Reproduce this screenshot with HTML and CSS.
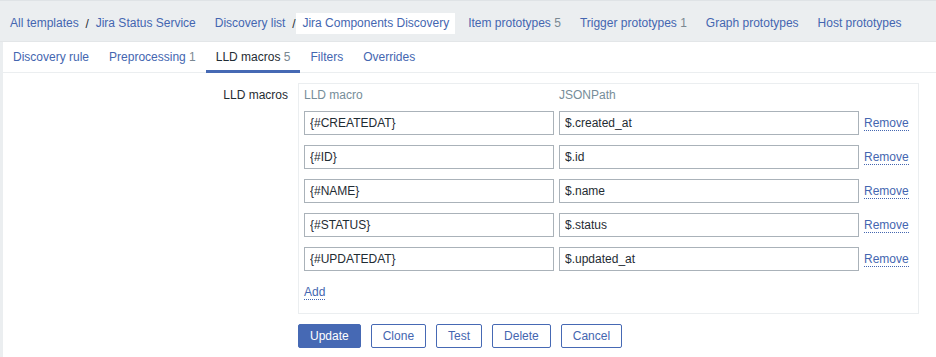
FILE: index.html
```html
<!DOCTYPE html>
<html lang="en">
<head>
    <meta charset="UTF-8">
    <meta name="viewport" content="width=device-width, initial-scale=1.0">
    <title>Discovery rules</title>
    <link rel="stylesheet" href="styles.css">
</head>
<body>
    <ul class="crumbs">
        <li class="crumb-group">
            <a href="#" class="crumb">All templates</a>
            <span class="sep">/</span>
            <a href="#" class="crumb">Jira Status Service</a>
        </li>
        <li class="crumb-group">
            <a href="#" class="crumb">Discovery list</a>
            <span class="sep">/</span>
            <span class="crumb selected">Jira Components Discovery</span>
        </li>
        <li class="crumb-group"><a href="#" class="crumb">Item prototypes <sup>5</sup></a></li>
        <li class="crumb-group"><a href="#" class="crumb">Trigger prototypes <sup>1</sup></a></li>
        <li class="crumb-group"><a href="#" class="crumb">Graph prototypes</a></li>
        <li class="crumb-group"><a href="#" class="crumb">Host prototypes</a></li>
    </ul>
    <div class="content">
        <ul class="tabs">
            <li><a href="#">Discovery rule</a></li>
            <li><a href="#">Preprocessing <sup>1</sup></a></li>
            <li class="active"><a href="#">LLD macros <sup>5</sup></a></li>
            <li><a href="#">Filters</a></li>
            <li><a href="#">Overrides</a></li>
        </ul>
        <form class="form">
            <div class="form-row">
                <label class="form-label">LLD macros</label>
                <div class="macro-box">
                    <div class="macro-grid">
                        <div class="col-head">LLD macro</div>
                        <div class="col-head">JSONPath</div>
                        <div></div>

                        <input type="text" value="{#CREATEDAT}">
                        <input type="text" value="$.created_at">
                        <a href="#" class="link-dotted">Remove</a>

                        <input type="text" value="{#ID}">
                        <input type="text" value="$.id">
                        <a href="#" class="link-dotted">Remove</a>

                        <input type="text" value="{#NAME}">
                        <input type="text" value="$.name">
                        <a href="#" class="link-dotted">Remove</a>

                        <input type="text" value="{#STATUS}">
                        <input type="text" value="$.status">
                        <a href="#" class="link-dotted">Remove</a>

                        <input type="text" value="{#UPDATEDAT}">
                        <input type="text" value="$.updated_at">
                        <a href="#" class="link-dotted">Remove</a>
                    </div>
                    <div class="add-row">
                        <a href="#" class="link-dotted">Add</a>
                    </div>
                </div>
            </div>
            <div class="form-actions">
                <button type="button" class="btn primary">Update</button>
                <button type="button" class="btn">Clone</button>
                <button type="button" class="btn">Test</button>
                <button type="button" class="btn">Delete</button>
                <button type="button" class="btn">Cancel</button>
            </div>
        </form>
    </div>
</body>
</html>
```

FILE: styles.css
```css
* { margin:0; padding:0; box-sizing: border-box; }
body {
    background-color: #ebeef0;
    font-family: Arial, "Liberation Sans", sans-serif;
    font-size: 12px;
    color: #1f2c33;
}
a {
    color: #4466b0;
    text-decoration: none;
}
sup {
    vertical-align: baseline;
    font-size: 12px;
    color: #7a8892;
}
ul { list-style: none; }

/* breadcrumbs */
.crumbs {
    display: flex;
    gap: 7px;
    padding: 12px 4px 7px;
    border-top: 1px solid #dfe3e6;
    border-bottom: 1px solid #e3e6e8;
}
.crumb-group {
    display: flex;
    align-items: center;
}
.crumb {
    display: block;
    padding: 0 6px;
    line-height: 21px;
}
.crumb.selected {
    background-color: #fff;
    color: #4466b0;
}
.sep {
    width: 5px;
    text-align: center;
    color: #1f2c33;
}

/* main area */
.content {
    margin-left: 3px;
    background-color: #fff;
    min-height: 316px;
}
.tabs {
    display: flex;
    border-bottom: 1px solid #ebeef0;
}
.tabs a {
    display: block;
    padding: 2px 10px 0;
    line-height: 26px;
    border-bottom: 3px solid transparent;
    margin-bottom: -1px;
}
.tabs .active a {
    color: #1f2c33;
    border-bottom-color: #4669b4;
}

.form {
    padding-top: 10px;
}
.form-row {
    display: flex;
    gap: 10px;
}
.form-label {
    width: 285px;
    text-align: right;
    padding-top: 5px;
    line-height: 14px;
}
.macro-box {
    width: 621px;
    border: 1px solid #ebeef0;
    padding: 6px 5px 13px;
}
.macro-grid {
    display: grid;
    grid-template-columns: 250px 300px auto;
    column-gap: 5px;
    row-gap: 10px;
    align-items: center;
}
.col-head {
    color: #768d99;
    line-height: 11px;
}
.macro-grid input {
    height: 24px;
    border: 1px solid #aab2b9;
    padding: 0 5px;
    font-family: Arial, "Liberation Sans", sans-serif;
    font-size: 12px;
    color: #1f2c33;
    background: #fff;
}
.link-dotted {
    justify-self: start;
    line-height: 14px;
    border-bottom: 1px dotted #4466b0;
}
.add-row {
    margin-top: 14px;
}
.add-row .link-dotted {
    display: inline-block;
}

.form-actions {
    display: flex;
    gap: 10px;
    padding: 10px 0 0 295px;
}
.btn {
    height: 24px;
    padding: 0 11px;
    border: 1px solid #4669b4;
    border-radius: 2px;
    background-color: #fff;
    color: #4466b0;
    font-family: Arial, "Liberation Sans", sans-serif;
    font-size: 12px;
}
.btn.primary {
    background-color: #4669b4;
    color: #fff;
}
```
